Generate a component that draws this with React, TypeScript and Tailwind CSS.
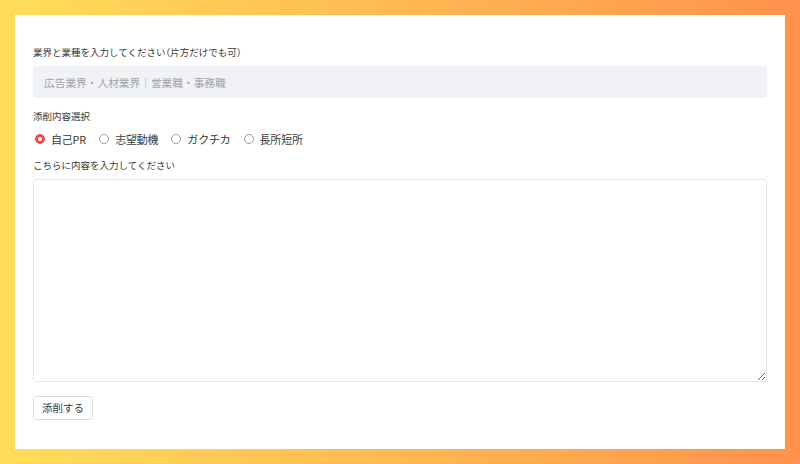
import React, { useState } from "react";

const font = { fontFamily: '"Noto Sans CJK JP", "Noto Sans", sans-serif' };

const options = ["自己PR", "志望動機", "ガクチカ", "長所短所"];

export default function App() {
  const [sel, setSel] = useState(0);
  return (
    <div
      className="w-[800px] h-[464px] bg-linear-to-r from-[#ffde59] to-[#ff914d] p-[15px]"
      style={font}
    >
      <div className="bg-white w-full h-full px-[18px] pt-[30px] flex flex-col text-[#383838]">
        <div className="h-[14px] leading-[14px] text-[9.5px] whitespace-nowrap">
          業界と業種を入力してください
          <span className="[font-feature-settings:'halt']">（</span>
          片方だけでも可
          <span className="[font-feature-settings:'halt']">）</span>
        </div>
        <input
          className="mt-[7px] h-[32px] w-full rounded-[3px] bg-[#f1f2f5] px-[11px] text-[10.7px] outline-none placeholder:text-[#a0a3aa]"
          placeholder="広告業界・人材業界｜営業職・事務職"
          style={font}
        />
        <div className="mt-[11px] h-[14px] leading-[14px] text-[9.5px]">添削内容選択</div>
        <div className="mt-[8px] h-[16px] flex items-center">
          {options.map((o, i) => (
            <button
              key={o}
              onClick={() => setSel(i)}
              className="flex items-center mr-[11px] pl-[2px]"
              style={font}
            >
              {sel === i ? (
                <span className="w-[10px] h-[10px] rounded-full border-[3px] border-[#ee4b4b] bg-white" />
              ) : (
                <span className="w-[10px] h-[10px] rounded-full border border-[#9a9a9a] bg-white" />
              )}
              <span className="ml-[6px] text-[11px] leading-[16px] text-[#383838] tracking-[-0.2px]">{o}</span>
            </button>
          ))}
        </div>
        <div className="mt-[11px] h-[14px] leading-[14px] text-[9.5px]">
          こちらに内容を入力してください
        </div>
        <textarea
          className="mt-[7px] h-[203px] w-full rounded-[3px] border border-[#e6e6e6] outline-none p-2 text-[11px]"
          style={font}
        />
        <div className="mt-[11px]">
          <button
            className="h-[24px] w-[60px] rounded-[3px] border border-[#dcdcdc] bg-white text-[10.5px] text-[#383838]"
            style={font}
          >
            添削する
          </button>
        </div>
      </div>
    </div>
  );
}
